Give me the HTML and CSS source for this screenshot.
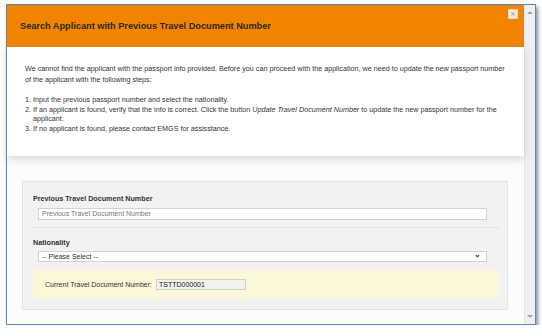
FILE: index.html
```html
<!DOCTYPE html>
<html>
<head>
<meta charset="utf-8">
<link rel="stylesheet" href="styles.css">
</head>
<body>
<div class="frame">
  <div class="content">
    <div class="header">
      <h1 class="title">Search Applicant with Previous Travel Document Number</h1>
      <span class="close">&#215;</span>
    </div>
    <div class="intro">
      <p class="lead">We cannot find the applicant with the passport info provided. Before you can proceed with the application, we need to update the new passport number of the applicant with the following steps:</p>
      <ol class="steps">
        <li>Input the previous passport number and select the nationality.</li>
        <li>If an applicant is found, verify that the info is correct. Click the button <em>Update Travel Document Number</em> to update the new passport number for the applicant.</li>
        <li>If no applicant is found, please contact EMGS for assisstance.</li>
      </ol>
    </div>
    <div class="form-area">
      <div class="panel">
        <div class="field">
          <label class="label">Previous Travel Document Number</label>
          <div class="input placeholder">Previous Travel Document Number</div>
        </div>
        <div class="divider"></div>
        <div class="field">
          <label class="label">Nationality</label>
          <div class="select"><span>-- Please Select --</span><span class="chev">&#8964;</span></div>
        </div>
        <div class="notice">
          <span class="notice-label">Current Travel Document Number:</span>
          <span class="ro-input">TSTTD000001</span>
        </div>
      </div>
    </div>
  </div>
  <div class="scrollbar">
    <span class="arrow up"></span>
    <span class="arrow down"></span>
  </div>
</div>
</body>
</html>
```
FILE: styles.css
```css
html, body {
  margin: 0;
  padding: 0;
  background: #ffffff;
  font-family: "Liberation Sans", Arial, sans-serif;
}
.frame {
  margin: 4px 0 0 6px;
  width: 528px;
  height: 319px;
  border: 1px solid #5b84c4;
  box-shadow: 2px 3px 4px rgba(0,0,0,0.45);
  display: flex;
  background: #fff;
}
.content {
  flex: 1;
  display: flex;
  flex-direction: column;
  min-width: 0;
}
.header {
  position: relative;
  background: #f08300;
  height: 42px;
  display: flex;
  align-items: center;
  padding-left: 13px;
  flex-shrink: 0;
}
.title {
  margin: 0;
  font-size: 9.2px;
  font-weight: bold;
  color: #2e2a22;
  margin-top: -1px;
}
.close {
  position: absolute;
  top: 4px;
  right: 6px;
  width: 8px;
  height: 8px;
  border: 1px solid #eed3b0;
  background: #f8ead9;
  color: #9a9a9a;
  font-size: 9px;
  line-height: 8px;
  text-align: center;
}
.intro {
  background: #fff;
  padding: 17px 16px 23px 18px;
  font-size: 7.2px;
  line-height: 10.5px;
  color: #333;
  box-shadow: 0 3px 8px rgba(150,150,140,0.35);
  position: relative;
  z-index: 1;
  flex-shrink: 0;
}
.lead {
  margin: 0 0 10px 0;
}
.steps {
  margin: 0;
  padding-left: 8px;
}
.steps li {
  line-height: 9.5px;
}
.form-area {
  flex: 1;
  background: #fcfcfc;
  padding: 25px 16px 0 15px;
}
.panel {
  box-sizing: border-box;
  background: #f2f2f2;
  border: 1px solid #e4e4e4;
  height: 129px;
  padding: 12px 8px 0 10px;
}
.label {
  display: block;
  font-size: 7.2px;
  font-weight: bold;
  color: #333;
  line-height: 10px;
}
.input, .select {
  margin: 4px 12px 0 5px;
  background: #fff;
  border: 1px solid #d2d2d2;
  font-size: 7px;
  padding: 0 3px;
  color: #333;
}
.input {
  height: 10px;
  line-height: 10px;
}
.placeholder {
  color: #777;
}
.select {
  display: flex;
  justify-content: space-between;
  height: 9px;
  line-height: 9px;
  margin-top: 3px;
}
.chev {
  font-size: 8px;
  font-weight: bold;
  line-height: 6px;
  padding-right: 2px;
}
.divider {
  height: 1px;
  background: #e2e2e2;
  margin: 7px 0 10px 0;
}
.notice {
  margin-top: 8px;
  height: 28px;
  background: #fdf7d9;
  display: flex;
  align-items: center;
  padding-left: 12px;
  font-size: 7px;
  color: #333;
}
.notice-label {
  margin-right: 4px;
}
.ro-input {
  width: 84px;
  height: 9px;
  line-height: 9px;
  padding: 0 2px;
  background: #f1f1ef;
  border: 1px solid #cfcfcf;
  color: #222;
}
.scrollbar {
  width: 10px;
  background: #f0f0f0;
  border-left: 1px solid #e6e6e6;
  display: flex;
  flex-direction: column;
  justify-content: space-between;
  align-items: center;
  padding: 6px 0;
}
.arrow {
  width: 0;
  height: 0;
  border-left: 3px solid transparent;
  border-right: 3px solid transparent;
}
.arrow.up {
  border-bottom: 3px solid #a0a0a0;
}
.arrow.down {
  border-top: 3px solid #a0a0a0;
}
```
